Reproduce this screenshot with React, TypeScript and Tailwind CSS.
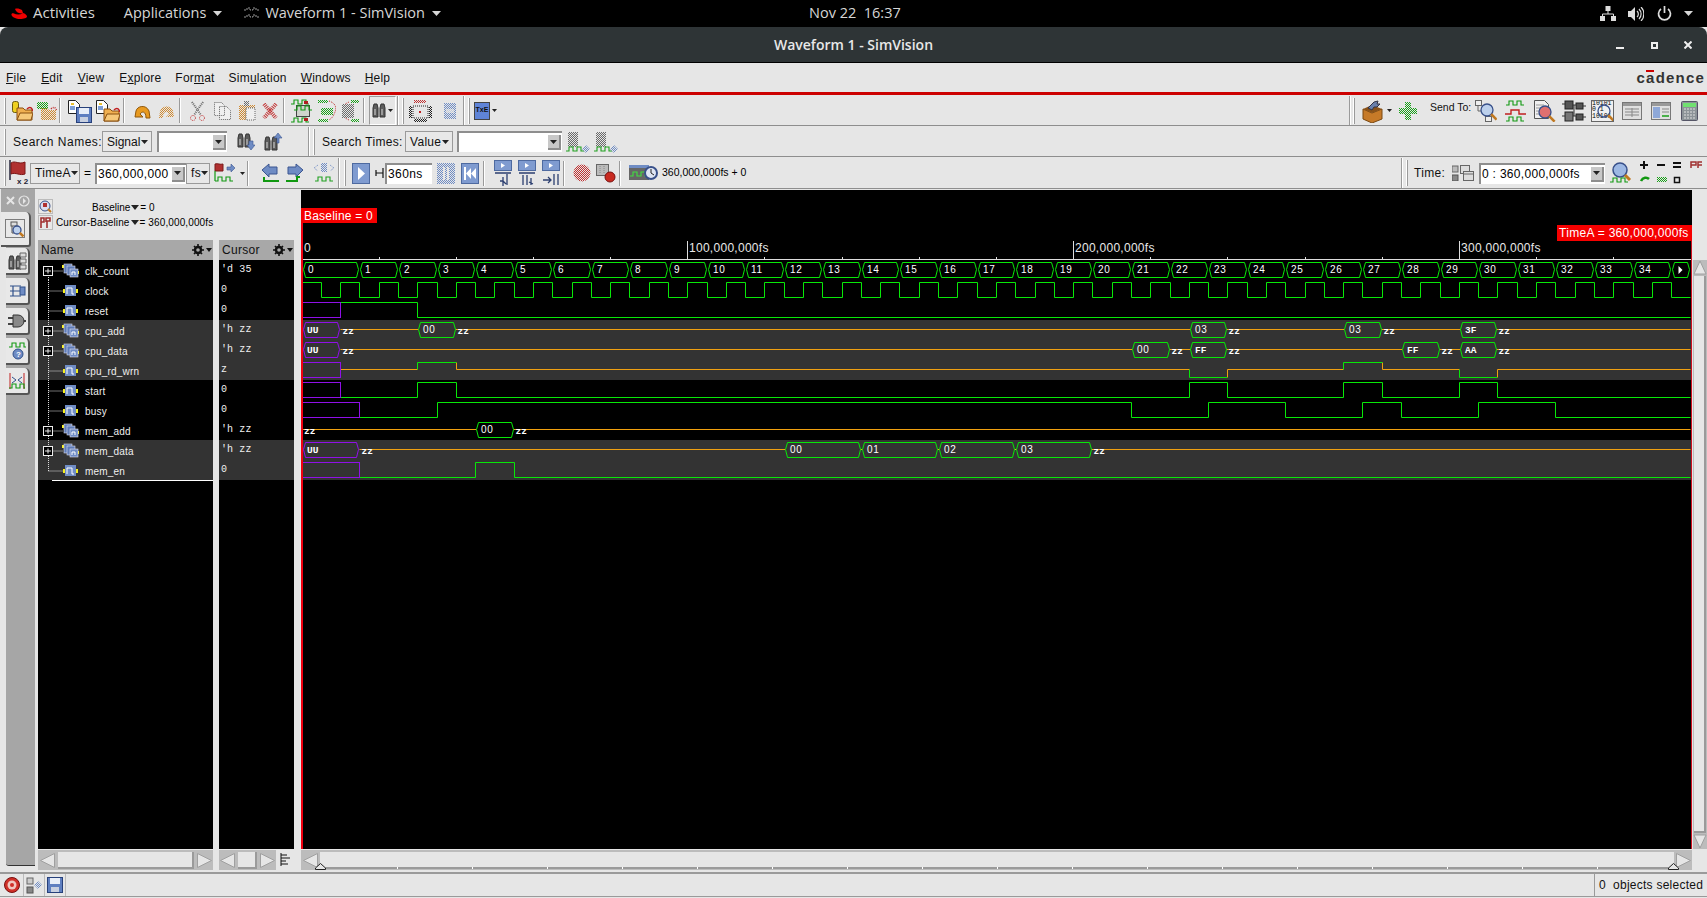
import React from "react";

type P = { w: number; h: number; className?: string; children?: React.ReactNode };
const S = ({ w, h, className = "", children }: P) => (
  <svg width={w} height={h} viewBox={`0 0 ${w} ${h}`} className={`block shrink-0 ${className}`}>
    {children}
  </svg>
);

const Defs = () => (
  <svg width="0" height="0" className="absolute">
    <defs>
      {[
        ["cg", "#6a6a6a"],
        ["cgr", "#18a018"],
        ["co", "#d08a30"],
        ["cr", "#c03030"],
        ["cb", "#6f8cc4"],
        ["ck", "#202020"],
      ].map(([id, c]) => (
        <pattern key={id} id={id} width="2" height="2" patternUnits="userSpaceOnUse">
          <rect width="1" height="1" fill={c} />
          <rect x="1" y="1" width="1" height="1" fill={c} />
        </pattern>
      ))}
    </defs>
  </svg>
);

const wave = "M0 5h3v-4h4v4h4v-4h4v4h3";
const Folder = ({ x = 0, y = 0, dim = false }: { x?: number; y?: number; dim?: boolean }) => (
  <g transform={`translate(${x} ${y})`}>
    <path d="M1 1h6l2 2h7v10H1z" fill={dim ? "url(#co)" : "#f0b050"} stroke={dim ? "none" : "#8a5010"} />
    {!dim && <path d="M1 13l3-7h13l-2 7z" fill="#f6c878" stroke="#8a5010" />}
    <path d="M11 2c2-2 4-2 5 0l1 2" fill="none" stroke={dim ? "#c03030" : "#c02020"} strokeDasharray={dim ? "1 1" : undefined} strokeWidth="1.5" />
  </g>
);
const Page = ({ x = 0, y = 0 }: { x?: number; y?: number }) => (
  <g transform={`translate(${x} ${y})`}>
    <path d="M.5.5h7l4 4v9h-11z" fill="#fff" stroke="#222" />
    <rect x="2" y="6" width="5" height="4" fill="#7ea0d8" />
    <rect x="3" y="3" width="3" height="2" fill="#e8c030" />
  </g>
);
const Binoc = ({ x = 0, y = 0 }: { x?: number; y?: number }) => (
  <g transform={`translate(${x} ${y})`}>
    <path d="M1 5l1-4h3l1 4v9H1zM8 5l1-4h3l1 4v9H8z" fill="#5c5c5c" stroke="#333" />
    <rect x="6" y="5" width="2" height="4" fill="#888" />
    <rect x="2" y="6" width="2" height="6" fill="#9a9a9a" />
    <rect x="9" y="6" width="2" height="6" fill="#9a9a9a" />
  </g>
);
const Mag = ({ x = 0, y = 0, r = 6, fill = "#bcd0ec" }: { x?: number; y?: number; r?: number; fill?: string }) => (
  <g transform={`translate(${x} ${y})`}>
    <circle cx={r} cy={r} r={r} fill={fill} stroke="#38508a" strokeWidth="1.3" />
    <path d={`M${r * 1.7} ${r * 1.7}l${r * 0.9} ${r * 0.9}`} stroke="#c07820" strokeWidth="2.6" />
  </g>
);
const GreenWave = ({ x = 0, y = 0, c = "#109810" }: { x?: number; y?: number; c?: string }) => (
  <path d={wave} transform={`translate(${x} ${y})`} fill="none" stroke={c} strokeWidth="1.1" />
);
const DD = ({ className = "", w = 5, c = "#222" }: { className?: string; w?: number; c?: string }) => (
  <S w={w} h={Math.round(w * 0.6)} className={className}>
    <path d={`M0 0h${w}L${w / 2} ${Math.round(w * 0.6)}z`} fill={c} />
  </S>
);
const Handle = ({ className = "" }: { className?: string }) => (
  <div className={`h-[26px] w-[2px] shrink-0 bg-[#9a9a9a] border-l border-white ${className}`} />
);
const Sep = ({ className = "" }: { className?: string }) => (
  <div className={`h-[25px] w-[2px] shrink-0 border-l border-[#9a9a9a] border-r border-r-white ${className}`} />
);
const GroupLine = ({ className = "" }: { className?: string }) => (
  <div className={`h-full w-[2px] shrink-0 border-l border-[#9a9a9a] border-r border-r-white ${className}`} />
);

const Opt = ({ label, className = "" }: { label: string; className?: string }) => (
  <div className={`h-[21px] shrink-0 flex items-center justify-between pl-[4px] pr-[3px] border border-[#9a9a9a] bg-[#e8e8e8] text-[12px] tracking-[0.3px] text-[#111] ${className}`}>
    <span>{label}</span>
    <DD w={7} />
  </div>
);
const Combo = ({ value = "", className = "", noBtn = false }: { value?: string; className?: string; noBtn?: boolean }) => (
  <div className={`h-[21px] shrink-0 flex items-center justify-between bg-white border-t-2 border-l-2 border-[#8e8e8e] text-[12px] text-black pl-[1px] ${className}`}>
    <span className="whitespace-pre">{value}</span>
    {!noBtn && (
      <div className="w-[13px] h-[15px] mr-[1px] bg-[#c8c8c8] border-r-2 border-b-2 border-[#8e8e8e] flex items-center justify-center">
        <DD w={7} />
      </div>
    )}
  </div>
);

const Btn = ({ className = "", children }: { className?: string; children: React.ReactNode }) => (
  <S w={18} h={21} className={className}>
    <rect x=".5" y=".5" width="17" height="20" fill="#7f9bd0" stroke="#4e6aa0" />
    {children}
  </S>
);
const Step = ({ className = "", d }: { className?: string; d: string }) => (
  <S w={18} h={26} className={className}>
    <rect x=".5" y=".5" width="17" height="10" fill="#7f9bd0" stroke="#4e6aa0" />
    <path d="M7 3l4 2.5L7 8z" fill="#fff" />
    <path d={d} fill="none" stroke="#2c3f70" strokeWidth="1.3" />
  </S>
);
const BigArrow = ({ className = "", right = false }: { className?: string; right?: boolean }) => (
  <S w={21} h={20} className={className}>
    <g transform={right ? "translate(21 0) scale(-1 1)" : ""}>
      <path d="M4 7l7-6v3h8v7h-8v3z" fill="#6f8cc4" stroke="#3a5590" />
    </g>
    <path d={right ? "M0 18h11v-4h3" : "M6 14v4h15"} fill="none" stroke="#109810" strokeWidth="2" />
  </S>
);

const Toolbar1 = () => (
  <div className="h-[31px] flex items-center border-b border-[#8e8e8e] shrink-0 pt-[1px]">
    <Handle className="ml-[4px]" />
    <S w={22} h={22} className="ml-[5px]">
      <rect x="1.5" y="1.5" width="6" height="11" rx="2" fill="#eed020" stroke="#6a5a10" />
      <Folder x={5} y={7} />
    </S>
    <S w={21} h={22} className="ml-[3px]">
      <rect x="1" y="2" width="11" height="7" fill="url(#cgr)" />
      <Folder x={4} y={7} dim />
    </S>
    <Sep className="ml-[2px]" />
    <S w={25} h={24} className="ml-[7px]">
      <Page y={1} />
      <rect x="8.5" y="8.5" width="15" height="15" fill="#5f7fc0" stroke="#27407a" />
      <rect x="11" y="9" width="10" height="6" fill="#e8eef8" />
      <rect x="12" y="18" width="8" height="5" fill="#c8d0e0" />
    </S>
    <S w={24} h={24} className="ml-[3px]">
      <Page y={1} />
      <Folder x={7} y={9} />
    </S>
    <Sep className="ml-[3px]" />
    <S w={17} h={16} className="ml-[9px]">
      <path d="M2 8c1-5 10-7 13 0l1 7h-4c0-7-4-7-6-4l3 3H1z" fill="#e89a20" stroke="#90580c" />
    </S>
    <S w={18} h={16} className="ml-[6px]">
      <path d="M16 8C15 3 6 1 3 8l-1 7h4c0-7 4-7 6-4l-3 3h8z" fill="url(#co)" />
    </S>
    <Sep className="ml-[4px]" />
    <S w={15} h={20} className="ml-[9px]">
      <path d="M2 1l9 13M13 1L4 14" stroke="#6a6a6a" strokeWidth="2" strokeDasharray="1 1" fill="none" />
      <circle cx="3" cy="17" r="2.5" fill="none" stroke="#c03030" strokeDasharray="1 1" />
      <circle cx="12" cy="17" r="2.5" fill="none" stroke="#c03030" strokeDasharray="1 1" />
    </S>
    <S w={17} h={18} className="ml-[9px]">
      <path d="M.5.5h7l3 3v10h-10zM5.5 4.5h7l4 4v9h-11z" fill="#efefef" stroke="#666" strokeDasharray="1 1" />
    </S>
    <S w={18} h={20} className="ml-[7px]">
      <path d="M1 4h16v15H1z" fill="url(#co)" />
      <path d="M6 0h5v5H6z" fill="url(#cg)" />
      <path d="M8 7h9v12H8z" fill="#efefef" stroke="#666" strokeDasharray="1 1" />
    </S>
    <S w={16} h={16} className="ml-[6px]">
      <path d="M2 1l12 14M14 1L2 15" stroke="#c03030" strokeWidth="4" strokeDasharray="1 1" fill="none" />
    </S>
    <Sep className="ml-[5px]" />
    <S w={22} h={24} className="ml-[6px]">
      <rect x="5.5" y="6.5" width="13" height="11" fill="#cfd4cc" stroke="#444" />
      <GreenWave x={3} y={6} />
      <GreenWave x={0} y={0} />
      <GreenWave x={0} y={18} />
      <rect x="13" y="2" width="4" height="3" fill="#b02020" />
      <rect x="13" y="19" width="4" height="3" fill="#b02020" />
    </S>
    <S w={19} h={24} className="ml-[4px]">
      <rect x="1" y="1" width="10" height="3" fill="url(#cgr)" />
      <rect x="1" y="20" width="10" height="3" fill="url(#cgr)" />
      <rect x="4" y="9" width="12" height="7" fill="url(#cgr)" />
      <path d="M12 2c6 2 8 6 6 11s-3 6-6 8" fill="none" stroke="#c03030" strokeDasharray="1 1" />
    </S>
    <S w={20} h={24} className="ml-[4px]">
      <rect x="2" y="5" width="12" height="14" fill="url(#cg)" />
      <rect x="11" y="1" width="8" height="3" fill="url(#cgr)" />
      <rect x="11" y="20" width="8" height="3" fill="url(#cgr)" />
      <path d="M9 3L5 5M9 21l-4-2" stroke="#c03030" strokeDasharray="1 1" />
    </S>
    <Sep className="ml-[3px]" />
    <div className="ml-[4px] w-[27px] h-[29px] shrink-0 flex items-center border-t border-l border-[#9a9a9a] border-r border-r-white border-b border-b-white">
      <S w={14} h={16} className="ml-[2px]"><Binoc /></S>
      <DD className="ml-[2px]" />
    </div>
    <GroupLine className="ml-[1px]" />
    <Handle className="ml-[3px]" />
    <S w={23} h={24} className="ml-[5px]">
      <rect x="5" y="1" width="12" height="3" fill="url(#cr)" />
      <rect x="4" y="7" width="15" height="12" fill="none" stroke="#222" strokeDasharray="1 1" />
      <rect x="0" y="7" width="3" height="12" fill="url(#ck)" />
      <rect x="20" y="7" width="3" height="12" fill="url(#ck)" />
      <rect x="5" y="20" width="13" height="3" fill="url(#ck)" />
      <rect x="10" y="12" width="2" height="2" fill="#c02020" />
    </S>
    <S w={14} h={18} className="ml-[11px]">
      <rect x="1" y="1" width="12" height="16" fill="url(#cb)" />
      <rect x="3" y="7" width="8" height="4" fill="#e6e6e6" opacity=".7" />
    </S>
    <GroupLine className="ml-[6px]" />
    <Handle className="ml-[3px]" />
    <div className="ml-[4px] w-[16px] h-[18px] shrink-0 bg-[#5f84d8] border border-[#444] flex items-center justify-center text-[7px] font-bold text-[#111]">TxE</div>
    <DD className="ml-[2px]" />
    <div className="ml-auto w-[358px] h-full flex items-center">
      <GroupLine />
      <Handle className="ml-[2px]" />
      <S w={21} h={24} className="ml-[7px]">
        <path d="M1 10l9 4 10-4v10l-10 4-9-4z" fill="#c67a28" stroke="#7a4810" />
        <path d="M1 10l9-4 10 4-10 4z" fill="#8a5218" />
        <path d="M6 9l6-6 4-1-1 3 3 0-3 3-3 0-2 3z" fill="#6a80ac" stroke="#334" />
      </S>
      <DD className="ml-[4px]" />
      <S w={18} h={18} className="ml-[7px]">
        <path d="M6 0h6v6h6v6h-6v6H6v-6H0V6h6z" fill="url(#cgr)" />
      </S>
      <div className="ml-[13px] w-[40px] -mt-[6px] text-[10.5px] whitespace-nowrap text-[#111]">Send To:</div>
      <S w={22} h={22} className="ml-[5px]">
        <rect x=".5" y=".5" width="6" height="5" fill="#eee" stroke="#666" />
        <rect x="10.5" y="16.5" width="6" height="5" fill="#eee" stroke="#666" />
        <path d="M3 6v5h4" fill="none" stroke="#666" />
        <Mag x={6} y={4} />
      </S>
      <S w={21} h={22} className="ml-[8px]">
        <GreenWave x={1} y={0} />
        <path d="M0 14h6v-4h8v4h7" fill="none" stroke="#c02020" strokeWidth="1.4" />
        <GreenWave x={1} y={16} />
      </S>
      <S w={22} h={22} className="ml-[8px]">
        <path d="M.5.5h10l4 4v14H.5z" fill="#f0f0f0" stroke="#555" />
        <path d="M2 5h8M2 8h8M2 11h8M2 14h8" stroke="#999" />
        <Mag x={5} y={6} fill="#e07070" />
      </S>
      <S w={24} h={22} className="ml-[6px]">
        <rect x="3" y="1" width="8" height="8" fill="#555" stroke="#222" />
        <rect x="3" y="12" width="8" height="9" fill="#777" stroke="#222" />
        <rect x="14" y="3" width="7" height="6" fill="#555" stroke="#222" />
        <rect x="14" y="14" width="7" height="6" fill="#555" stroke="#222" />
        <path d="M0 4h3M0 16h3M11 5h3M11 16h3M21 6h3M21 17h3M12 5v11" stroke="#333" fill="none" />
      </S>
      <div className="ml-[5px] relative w-[23px] h-[22px] shrink-0 border border-[#666] bg-[#f0f0f0] text-[6.5px] leading-[6.5px] text-black overflow-hidden font-['Liberation_Mono']">
        10101<br />0 1 <br />10101
        <svg width="23" height="22" className="absolute -left-[1px] -top-[1px]">
          <Mag x={7} y={5} r={6} fill="none" />
        </svg>
      </div>
      <S w={20} h={18} className="ml-[8px]">
        <rect x=".5" y=".5" width="19" height="17" fill="#e0e0e0" stroke="#777" />
        <rect x="1" y="1" width="18" height="3" fill="#999" />
        <path d="M3 7h14M3 10h14M3 13h14M10 6v9" stroke="#888" />
      </S>
      <S w={20} h={18} className="ml-[9px]">
        <rect x=".5" y=".5" width="19" height="17" fill="#e0e0e0" stroke="#777" />
        <rect x="1" y="1" width="18" height="3" fill="#999" />
        <rect x="2" y="5" width="7" height="11" fill="#8ea8d8" />
        <path d="M11 7h7M11 10h7" stroke="#888" />
        <path d="M11 14h7" stroke="#18a018" strokeWidth="1.5" />
      </S>
      <S w={17} h={20} className="ml-[10px]">
        <rect x=".5" y=".5" width="16" height="19" rx="1" fill="#8c9398" stroke="#556" />
        <rect x="2" y="2" width="13" height="4" fill="#70e070" />
        <path d="M3 8h11M3 11h11M3 14h11M3 17h11" stroke="#e0e0e0" strokeDasharray="2 1" />
      </S>
    </div>
  </div>
);

const Toolbar2 = () => (
  <div className="h-[30px] mt-[1px] flex items-center border-b border-[#8e8e8e] shrink-0">
    <Handle className="ml-[4px]" />
    <div className="ml-[7px] w-[85px] text-[12px] tracking-[0.5px] whitespace-nowrap text-[#111]">Search Names:</div>
    <Opt label="Signal" className="ml-[4px] w-[50px] !tracking-normal" />
    <Combo className="ml-[5px] w-[70px]" />
    <S w={18} h={20} className="ml-[10px]">
      <Binoc y={1} />
      <path d="M12 9h4v4h2l-4 5-4-5h2z" fill="#6f8cc4" stroke="#3a5590" strokeWidth=".6" />
    </S>
    <S w={19} h={20} className="ml-[9px]">
      <Binoc y={4} />
      <path d="M13 11V6h-3l4-5 4 5h-3v5z" fill="#6f8cc4" stroke="#3a5590" strokeWidth=".6" />
    </S>
    <GroupLine className="ml-[25px]" />
    <Handle className="ml-[3px]" />
    <div className="ml-[7px] w-[78px] text-[12px] tracking-[0.3px] whitespace-nowrap text-[#111]">Search Times:</div>
    <Opt label="Value" className="ml-[5px] w-[48px]" />
    <Combo className="ml-[4px] w-[105px]" />
    <S w={24} h={22} className="ml-[4px]">
      <rect x="2" y="1" width="10" height="15" fill="url(#cg)" />
      <GreenWave x={0} y={15} c="#20a020" />
      <path d="M16 18l4-4 4 4-4 4z" fill="url(#cb)" />
    </S>
    <S w={24} h={22} className="ml-[4px]">
      <rect x="2" y="1" width="10" height="15" fill="url(#cg)" />
      <GreenWave x={0} y={15} c="#20a020" />
      <path d="M16 18l4-4 4 4-4 4z" fill="url(#cb)" />
    </S>
  </div>
);

const Toolbar3 = () => (
  <div className="h-[31px] mt-[1px] flex items-center border-b border-[#8e8e8e] shrink-0">
    <Handle className="ml-[4px]" />
    <div className="ml-[3px] relative w-[21px] h-[26px] shrink-0">
      <S w={18} h={20}>
        <path d="M1 0v20" stroke="#556" strokeWidth="2" />
        <path d="M2 3c4-3 8 2 14-1v12c-5 2-9-2-14 0z" fill="#b03030" stroke="#7a1818" />
      </S>
      <span className="absolute left-[8px] top-[17px] text-[8px] font-bold leading-[10px] text-[#223] whitespace-nowrap">x 2</span>
    </div>
    <Opt label="TimeA" className="w-[50px]" />
    <span className="ml-[4px] w-[6px] text-[12px] text-black">=</span>
    <Combo value="360,000,000" className="ml-[5px] w-[91px] tracking-[0.35px]" />
    <Opt label="fs" className="w-[24px]" />
    <S w={22} h={20} className="ml-[4px]">
      <path d="M1 1c3-1 5 1 8 0v7H1z" fill="#b03030" stroke="#7a1818" />
      <path d="M13 4h4V1l4 4-4 4V7h-4z" fill="#6f8cc4" stroke="#3a5590" strokeWidth=".6" />
      <GreenWave x={1} y={13} />
      <path d="M1 8v10" stroke="#109810" strokeWidth="1.2" />
    </S>
    <DD className="ml-[4px]" />
    <Sep className="ml-[2px]" />
    <BigArrow className="ml-[9px]" />
    <BigArrow className="ml-[7px]" right />
    <S w={22} h={22} className="ml-[6px]">
      <rect x="8" y="1" width="6" height="9" fill="url(#cb)" />
      <path d="M5 3L1 6l4 3M17 3l4 3-4 3" fill="none" stroke="#6f8cc4" strokeDasharray="1 1" />
      <GreenWave x={2} y={14} c="#20a020" />
    </S>
    <GroupLine className="ml-[3px]" />
    <Handle className="ml-[4px]" />
    <Btn className="ml-[6px]"><path d="M6 4l7 6.5L6 17z" fill="#fff" /></Btn>
    <S w={9} h={12} className="ml-[5px]">
      <path d="M8 1v10M1 3v6M1 6h7" stroke="#111" strokeWidth="1.2" fill="none" />
    </S>
    <Combo value="360ns" noBtn className="ml-[1px] w-[47px] tracking-[0.4px]" />
    <S w={18} h={21} className="ml-[5px]">
      <rect x="0" y="0" width="18" height="21" fill="url(#cb)" />
      <rect x="6" y="4" width="2" height="13" fill="#e6e6e6" />
      <rect x="10" y="4" width="2" height="13" fill="#e6e6e6" />
    </S>
    <Btn className="ml-[6px]"><path d="M3 4h2v13H3zM5 10.5L10 5v11zM10 10.5L15 5v11z" fill="#fff" /></Btn>
    <Sep className="ml-[4px]" />
    <Step className="ml-[9px]" d="M1 13h16M9 17v9M6 21h3l0 0M13 14v11M9 21l3 3" />
    <Step className="ml-[6px]" d="M1 13h16M5 15v10M9 15v10M13 18v7M11 22l4 2" />
    <Step className="ml-[6px]" d="M1 20h8M6 17l3 3-3 3M12 14v11M16 14v11" />
    <Sep className="ml-[3px]" />
    <S w={18} h={18} className="ml-[8px]">
      <circle cx="9" cy="9" r="8.5" fill="url(#cr)" />
    </S>
    <S w={20} h={20} className="ml-[5px]">
      <rect x=".5" y="1.5" width="12" height="11" fill="#bbb" stroke="#666" />
      <path d="M4 3v8M8 3v8" stroke="#888" strokeDasharray="1 1" />
      <circle cx="14" cy="14" r="5" fill="#c82a20" stroke="#7a1010" />
    </S>
    <Sep className="ml-[3px]" />
    <S w={29} h={16} className="ml-[8px]">
      <rect x="0" y="0" width="20" height="15" fill="#666" />
      <rect x="0" y="0" width="20" height="3" fill="#6f8cc4" />
      <GreenWave x={1} y={6} c="#40e040" />
      <circle cx="22" cy="8" r="6" fill="#dfe6f4" stroke="#38508a" strokeWidth="2" />
      <path d="M22 4v4l3 2" stroke="#222" fill="none" />
    </S>
    <span className="ml-[4px] w-[87px] text-[10.5px] whitespace-nowrap text-black">360,000,000fs + 0</span>
    <div className="ml-auto w-[306px] h-full flex items-center">
      <GroupLine />
      <Handle className="ml-[3px]" />
      <span className="ml-[6px] w-[29px] text-[12px] tracking-[0.3px] text-[#111]">Time:</span>
      <S w={22} h={16} className="ml-[9px]">
        <rect x="0" y="1" width="6" height="6" fill="#bbb" stroke="#666" />
        <rect x="0" y="10" width="6" height="6" fill="#888" stroke="#555" />
        <rect x="8.5" y=".5" width="9" height="8" fill="#ddd" stroke="#666" />
        <rect x="11.5" y="6.5" width="10" height="9" fill="#ddd" stroke="#666" />
        <path d="M12 9h9" stroke="#666" />
      </S>
      <Combo value="0 : 360,000,000fs" className="ml-[5px] w-[126px] tracking-[0.3px]" />
      <S w={22} h={22} className="ml-[5px]">
        <circle cx="10" cy="8" r="7" fill="#9db8e4" stroke="#38508a" strokeWidth="1.5" />
        <path d="M15 13l5 5" stroke="#c07820" strokeWidth="3" />
        <GreenWave x={0} y={15} />
      </S>
      <S w={64} h={26} className="ml-[6px]">
        <path d="M6 1v8M2 5h8M19 5h8M35 3h8M35 7h8" stroke="#111" strokeWidth="2" fill="none" />
        <path d="M53 8V2h5v3h-5M60 8V2h5v3h-5" stroke="#a03030" strokeWidth="1.5" fill="none" />
        <path d="M3 21c2-4 6-4 8-2" stroke="#109810" strokeWidth="2.5" fill="none" />
        <rect x="19" y="17" width="10" height="5" fill="url(#cgr)" />
        <rect x="36.5" y="17.5" width="5" height="5" fill="none" stroke="#111" strokeWidth="1.5" />
      </S>
    </div>
  </div>
);

const X = (t: number) => Math.floor(t * 3.858 + 1) + 0.5;
const GREEN = "#08e808";
const ORANGE = "#f0a010";
const PURPLE = "#9010e8";
const hex = (a: number, b: number, y: number) => {
  const x0 = X(a) + 1;
  const x1 = X(b) - 1;
  return `M${x0} ${y + 9.5}L${x0 + 2} ${y + 2.5}H${x1 - 2}L${x1} ${y + 9.5}L${x1 - 2} ${y + 17.5}H${x0 + 2}Z`;
};
const digit = (t: number, y: number, s: string) => (
  <text key={`${t}-${y}`} x={X(t) + 5.5} y={y + 13} fontFamily="Liberation Sans" fontSize="10" letterSpacing="0.6" fill="#fff">{s}</text>
);
const mono = (x: number, y: number, s: string) => (
  <text key={`${x}-${y}-${s}`} x={x} y={y + 13} fontFamily="Liberation Mono" fontSize="9.5" fontWeight="bold" fill="#fff">{s}</text>
);
const digital = (y: number, edges: number[], startHigh: boolean, start = 0) => {
  let d = `M${X(start)} ${y + (startHigh ? 2.5 : 17.5)}`;
  let hi = startHigh;
  for (const e of edges) {
    d += `H${X(e)}V${y + (hi ? 17.5 : 2.5)}`;
    hi = !hi;
  }
  return d + `H${X(360)}`;
};
const Z = ({ a, b, y }: { a: number; b: number; y: number }) => (
  <path d={`M${X(a)} ${y + 9.5}H${X(b)}`} stroke={ORANGE} fill="none" />
);
const Y = (i: number) => 70 + 20 * i;

const Bus = ({ row, a, b, s, noZ }: { row: number; a: number; b: number; s: string; noZ?: boolean }) => {
  const y = Y(row);
  return (
    <g>
      <path d={hex(a, b, y)} fill={row === 0 ? "#000" : row >= 9 || row < 6 ? "#333" : "#000"} stroke={GREEN} />
      {/^\d+$/.test(s) ? (
        <text x={X(a) + 5.5} y={y + 13} fontFamily="Liberation Sans" fontSize="10" letterSpacing="0.8" fill="#fff">{s}</text>
      ) : (
        mono(X(a) + 5.5, y, s)
      )}
      {!noZ && mono(X(b) + 1, y + 1, "zz")}
    </g>
  );
};

const Purple = ({ row, b, bus }: { row: number; b: number; bus?: boolean }) => {
  const y = Y(row);
  return bus ? (
    <g>
      <path d={hex(0, b, y)} fill="#333" stroke={PURPLE} />
      {mono(6, y, "UU")}
      {mono(X(b) + 2, y + 1, "zz")}
    </g>
  ) : (
    <rect x="1.5" y={y + 2.5} width={X(b) - 1.5} height="15" fill="none" stroke={PURPLE} />
  );
};

const Waves = () => {
  const w = 1391;
  const clockEdges: number[] = [];
  for (let t = 5; t < 360; t += 5) clockEdges.push(t);
  const ticks: number[] = [];
  for (let t = 20; t <= 340; t += 20) if (t % 100) ticks.push(t);
  return (
    <svg width={w} height={659} viewBox={`0 0 ${w} 659`} className="block shrink-0 bg-black">
      <rect y="130" width={w - 1} height="60" fill="#333" />
      <rect y="250" width={w - 1} height="40" fill="#333" />

      <path d={`M0 69.5H${w}`} stroke="#ddd" />
      {ticks.map((t) => <path key={t} d={`M${X(t)} 67V69`} stroke="#ddd" />)}
      {[100, 200, 300].map((t) => (
        <g key={t}>
          <path d={`M${X(t)} 51V69`} stroke="#ddd" />
          <text x={X(t) + 1.5} y="62" fontFamily="Liberation Sans" fontSize="12" letterSpacing="0.28" fill="#e8e8e8">{`${t},000,000fs`}</text>
        </g>
      ))}
      <text x="3" y="62" fontFamily="Liberation Sans" fontSize="12" fill="#e8e8e8">0</text>

      <Bus row={0} a={0} b={15} s="0" noZ />
      {Array.from({ length: 34 }, (_, i) => (
        <g key={i}>
          <path d={hex(15 + i * 10, 25 + i * 10, Y(0))} fill="none" stroke={GREEN} />
          {digit(15 + i * 10, Y(0), String(i + 1))}
        </g>
      ))}
      <path d={hex(355, 360, Y(0))} fill="none" stroke={GREEN} />
      <path d={`M${X(355) + 7} ${Y(0) + 6}l4 4-4 4z`} fill="#fff" />

      <path d={digital(Y(1), clockEdges, true)} fill="none" stroke={GREEN} />
      <path d={digital(Y(2), [30], true, 10)} fill="none" stroke={GREEN} />
      <Purple row={2} b={10} />

      <Z a={10} b={360} y={Y(3)} />
      <Purple row={3} b={10} bus />
      <Bus row={3} a={30} b={40} s="00" />
      <Bus row={3} a={230} b={240} s="03" />
      <Bus row={3} a={270} b={280} s="03" />
      <Bus row={3} a={300} b={310} s="3F" />

      <Z a={10} b={360} y={Y(4)} />
      <Purple row={4} b={10} bus />
      <Bus row={4} a={215} b={225} s="00" />
      <Bus row={4} a={230} b={240} s="FF" />
      <Bus row={4} a={285} b={295} s="FF" />
      <Bus row={4} a={300} b={310} s="AA" />

      <path d={`M${X(10)} ${Y(5) + 9.5}H${X(30)}M${X(40)} ${Y(5) + 2.5}V${Y(5) + 9.5}H${X(230)}M${X(240)} ${Y(5) + 17.5}V${Y(5) + 9.5}H${X(270)}M${X(280)} ${Y(5) + 2.5}V${Y(5) + 9.5}H${X(300)}M${X(310)} ${Y(5) + 17.5}V${Y(5) + 9.5}H${X(360)}`} fill="none" stroke={ORANGE} />
      <path d={`M${X(30)} ${Y(5) + 9.5}V${Y(5) + 2.5}H${X(40)}M${X(230)} ${Y(5) + 9.5}V${Y(5) + 17.5}H${X(240)}M${X(270)} ${Y(5) + 9.5}V${Y(5) + 2.5}H${X(280)}M${X(300)} ${Y(5) + 9.5}V${Y(5) + 17.5}H${X(310)}`} fill="none" stroke={GREEN} />
      <Purple row={5} b={10} />

      <path d={digital(Y(6), [30, 40, 230, 240, 270, 280, 300, 310], false, 10)} fill="none" stroke={GREEN} />
      <Purple row={6} b={10} />
      <path d={digital(Y(7), [35, 215, 235, 255, 275, 285, 305, 325], false, 15)} fill="none" stroke={GREEN} />
      <Purple row={7} b={15} />

      <Z a={0} b={360} y={Y(8)} />
      {mono(3, Y(8) + 1, "zz")}
      <Bus row={8} a={45} b={55} s="00" />

      <Z a={15} b={360} y={Y(9)} />
      <Purple row={9} b={15} bus />
      <Bus row={9} a={125} b={145} s="00" noZ />
      <Bus row={9} a={145} b={165} s="01" noZ />
      <Bus row={9} a={165} b={185} s="02" noZ />
      <Bus row={9} a={185} b={205} s="03" />

      <path d={digital(Y(10), [45, 55], false, 15)} fill="none" stroke={GREEN} />
      <Purple row={10} b={15} />

      <path d="M1 18V659" stroke="#f00010" strokeWidth="2" />
      <path d="M1390.5 35V659" stroke="#d01020" />

      <rect x="0" y="18" width="76" height="15" fill="#f60000" />
      <text x="3" y="30" fontFamily="Liberation Sans" fontSize="12" letterSpacing="0.2" fill="#fff">Baseline = 0</text>
      <rect x="1256" y="35" width="135" height="16" fill="#f60000" />
      <text x="1258" y="47" fontFamily="Liberation Sans" fontSize="12" letterSpacing="0.3" fill="#fff">TimeA = 360,000,000fs</text>
    </svg>
  );
};

const Tree = ({ first, last, group }: { first?: boolean; last?: boolean; group?: boolean }) => (
  <S w={43} h={20} className="ml-[5px]">
    <path d={`M5.5 ${first ? 11 : 0}V${last ? 11 : 20}M5.5 11H20`} stroke="#ddd" strokeDasharray="1 1" fill="none" />
    {group && (
      <g>
        <rect x=".5" y="6.5" width="9" height="9" fill="#000" stroke="#eee" />
        <path d="M2 11h6M5 8.5v5" stroke="#eee" />
      </g>
    )}
    {group ? (
      <g>
        <rect x="19" y="5" width="2" height="3" fill="#f4ee20" />
        <rect x="34" y="11" width="2" height="3" fill="#f4ee20" />
        <rect x="21" y="4" width="8" height="9" fill="#5f7cb8" stroke="#dde" strokeWidth=".6" />
        <rect x="24" y="6" width="8" height="9" fill="#5f7cb8" stroke="#dde" strokeWidth=".6" />
        <rect x="27" y="9" width="8" height="8" fill="#6f8cc4" stroke="#dde" strokeWidth=".6" />
        <path d="M29 15v-3h3v3" stroke="#fff" fill="none" />
      </g>
    ) : (
      <g>
        <rect x="20" y="9" width="2" height="4" fill="#f4ee20" />
        <rect x="33" y="9" width="2" height="4" fill="#f4ee20" />
        <rect x="22" y="5" width="11" height="11" fill="#6f8cc4" />
        <path d="M24 14v-6h5v6h2" stroke="#fff" fill="none" />
      </g>
    )}
  </S>
);

const SIG: [string, string, boolean][] = [
  ["clk_count", "'d 35", true],
  ["clock", "0", false],
  ["reset", "0", false],
  ["cpu_add", "'h zz", true],
  ["cpu_data", "'h zz", true],
  ["cpu_rd_wrn", "z", false],
  ["start", "0", false],
  ["busy", "0", false],
  ["mem_add", "'h zz", true],
  ["mem_data", "'h zz", true],
  ["mem_en", "0", false],
];
const darkRow = (i: number) => (i >= 3 && i <= 5) || i >= 9;

const Arrow = ({ d, className = "" }: { d: string; className?: string }) => (
  <S w={17} h={17} className={className}>
    <path d={d} fill="#e6e6e6" stroke="#a0a0a0" />
  </S>
);
const LEFT = "M15.5 1.5v14L1.5 8.5z";
const RIGHT = "M1.5 1.5v14L15.5 8.5z";

const Cog = () => (
  <S w={20} h={12}>
    <circle cx="6" cy="6" r="3" fill="none" stroke="#111" strokeWidth="2.4" />
    <path d="M6 0v2M6 10v2M0 6h2M10 6h2M2 2l1.4 1.4M8.6 8.6L10 10M2 10l1.4-1.4M8.6 3.4L10 2" stroke="#111" strokeWidth="1.6" />
    <path d="M14 4h6l-3 4z" fill="#111" />
  </S>
);

const Tab = ({ first, children }: { first?: boolean; children: React.ReactNode }) => (
  <div className={`${first ? "-ml-[5px] w-[30px] h-[35px] mb-[1px]" : "ml-0 w-[24px] h-[27px] mb-[3px]"} shrink-0 bg-[#e8e8e8] border-r-2 border-b-2 border-[#555] rounded-tr-[5px] rounded-br-[3px] flex items-center justify-center`}>
    {children}
  </div>
);

const SideTabs = () => (
  <div className="w-[35px] shrink-0 flex flex-col">
    <div className="h-[23px] ml-[1px] bg-[#a6a6a6] flex items-center pl-[5px] gap-[3px] shrink-0">
      <S w={9} h={9}><path d="M1 1l7 7M8 1L1 8" stroke="#e6e6e6" strokeWidth="2" /></S>
      <S w={12} h={12}>
        <circle cx="6" cy="6" r="5" fill="none" stroke="#e6e6e6" strokeWidth="1.2" />
        <path d="M5 3l3 3-3 3z" fill="#e6e6e6" />
      </S>
    </div>
    <div className="flex-1 ml-[6px] bg-[#a6a6a6] flex flex-col mb-[5px] rounded-bl-[3px] border-b border-[#333]">
      <Tab first>
        <S w={20} h={20}>
          <rect x=".5" y=".5" width="19" height="18" fill="none" stroke="#111" strokeDasharray="1 1" />
          <rect x="6" y="3" width="6" height="4" fill="#ddd" stroke="#555" />
          <path d="M7 7v7h3" stroke="#555" fill="none" />
          <Mag x={8} y={7} r={4} />
        </S>
      </Tab>
      <Tab>
        <S w={19} h={18}>
          <Binoc y={3} />
          <path d="M12 1h6v4h-6zM12 7h6v4h-6zM12 13h6v4h-6z" fill="#ddd" stroke="#666" />
        </S>
      </Tab>
      <Tab>
        <S w={17} h={16}>
          <path d="M1 3h11M1 8h11M1 13h11M4 3v10" stroke="#30508a" strokeWidth="1.2" />
          <rect x="11" y="4" width="5" height="8" fill="#6f8cc4" stroke="#30508a" />
        </S>
      </Tab>
      <Tab>
        <S w={18} h={14}>
          <path d="M0 4h5M0 10h5M14 7h4" stroke="#444" strokeWidth="2" />
          <path d="M5 1h5a6 6 0 0 1 0 12H5z" fill="#888" stroke="#333" />
        </S>
      </Tab>
      <Tab>
        <S w={17} h={18}>
          <GreenWave y={0} />
          <circle cx="9" cy="12" r="5" fill="#6f8cc4" stroke="#30508a" />
          <text x="7" y="15" fontSize="8" fontWeight="bold" fill="#fff" fontFamily="Liberation Sans">?</text>
        </S>
      </Tab>
      <Tab>
        <S w={16} h={18}>
          <path d="M1 1v16M15 1v16" stroke="#c02020" />
          <path d="M3 5l4 3-4 3M13 5L9 8l4 3" stroke="#30508a" fill="none" />
          <GreenWave y={11} />
        </S>
      </Tab>
    </div>
  </div>
);

const NamePanel = () => (
  <div className="ml-[3px] w-[175px] shrink-0 flex flex-col">
    <div className="h-[51px] relative shrink-0 text-[10px] text-black">
      <div className="absolute left-0 top-[10px] w-[15px] h-[15px] border border-[#bbb] bg-[#e8e8e8] flex items-center justify-center">
        <S w={13} h={13}>
          <circle cx="6" cy="6" r="5" fill="#dde" stroke="#38508a" />
          <rect x="4" y="3" width="4" height="4" fill="#b03030" />
          <path d="M9 9l3 3" stroke="#c07820" strokeWidth="2" />
        </S>
      </div>
      <div className="absolute left-0 top-[26px] w-[15px] h-[15px] border border-[#bbb] bg-[#e8e8e8] flex items-center justify-center">
        <S w={13} h={13}><path d="M2 12V2h3v4H2M7 6V2h4v3H8v7" fill="none" stroke="#a03030" strokeWidth="1.6" /></S>
      </div>
      <div className="absolute left-[54px] top-[11px] flex items-center whitespace-nowrap">Baseline<DD className="ml-[1px]" w={8} /><span className="ml-[1px]">= 0</span></div>
      <div className="absolute left-[18px] top-[26px] flex items-center whitespace-nowrap tracking-[0.12px]">Cursor-Baseline<DD className="ml-[1px]" w={8} /><span className="ml-[1px]">= 360,000,000fs</span></div>
    </div>
    <div className="h-5 bg-[#a8a8a8] shrink-0 flex items-center pl-[3px] pr-[1px] justify-between text-[12px] tracking-[0.2px] text-[#111]">
      <span>Name</span><Cog />
    </div>
    <div className="flex-1 bg-black min-h-0">
      {SIG.map(([n, , g], i) => (
        <div key={n} className={`h-5 flex items-center relative ${darkRow(i) ? "bg-[#333]" : "bg-black"}`}>
          <Tree first={i === 0} last={i === 10} group={g} />
          <span className="ml-[-1px] pt-[2px] text-[10px] tracking-[0.2px] text-[#f0f0f0]">{n}</span>
          {i === 10 && (
            <div className="absolute left-[14px] right-0 bottom-[-1px] h-[1px] bg-white" />
          )}
        </div>
      ))}
    </div>
    <div className="h-[20px] mt-[1px] mb-[1px] shrink-0 flex items-center bg-[#bcbcbc]">
      <Arrow d={LEFT} className="ml-[1px]" />
      <div className="flex-1 h-[17px] mx-[2px] bg-[#e6e6e6] border-r-2 border-b-2 border-[#9a9a9a]" />
      <Arrow d={RIGHT} />
    </div>
  </div>
);

const CursorPanel = () => (
  <div className="ml-[6px] w-[75px] shrink-0 flex flex-col">
    <div className="h-[51px] shrink-0" />
    <div className="h-5 bg-[#a8a8a8] shrink-0 flex items-center pl-[3px] pr-[1px] justify-between text-[12px] tracking-[0.3px] text-[#111]">
      <span>Cursor</span><Cog />
    </div>
    <div className="flex-1 bg-black min-h-0">
      {SIG.map(([n, v], i) => (
        <div key={n} className={`h-5 pl-[2px] pb-[1px] flex items-center font-['Liberation_Mono'] text-[10px] tracking-[0.1px] text-[#f0f0f0] whitespace-pre ${darkRow(i) ? "bg-[#333]" : "bg-black"}`}>{v}</div>
      ))}
    </div>
    <div className="h-[20px] mt-[1px] mb-[1px] shrink-0 flex items-center">
      <div className="w-[57px] h-full flex items-center bg-[#bcbcbc]">
        <Arrow d={LEFT} />
        <div className="flex-1 h-[17px] mx-[2px] bg-[#e6e6e6] border-r-2 border-b-2 border-[#9a9a9a]" />
        <Arrow d={RIGHT} />
      </div>
      <S w={18} h={20}>
        <path d="M5 3v13M5 5h6M5 8h9M5 11h5M5 14h7" stroke="#111" fill="none" />
      </S>
    </div>
  </div>
);

const WavePanel = () => (
  <div className="ml-[7px] w-[1391px] shrink-0 flex flex-col">
    <div className="h-[1px] shrink-0" />
    <Waves />
    <div className="h-[20px] mt-[1px] mb-[1px] shrink-0 flex items-center bg-[#bcbcbc] relative">
      <Arrow d={LEFT} className="ml-[1px]" />
      <div className="flex-1 h-[17px] mx-[1px] bg-[#e6e6e6] border-b-2 border-[#9a9a9a]" />
      <Arrow d={RIGHT} />
      <S w={11} h={7} className="absolute left-[14px] bottom-0">
        <path d="M5.5.5l5 4.5v1.5H.5V5z" fill="#e6e6e6" stroke="#222" />
      </S>
      <S w={11} h={7} className="absolute left-[1367px] bottom-0">
        <path d="M5.5.5l5 4.5v1.5H.5V5z" fill="#e6e6e6" stroke="#222" />
      </S>
      <svg width="1391" height="2" className="absolute left-0 bottom-[1px]">
        {Array.from({ length: 17 }, (_, i) => (
          <rect key={i} x={96 + i * 75} width="1" height="2" fill="#fff" />
        ))}
      </svg>
    </div>
  </div>
);

const VScroll = () => (
  <div className="ml-[1px] w-[14px] shrink-0 flex flex-col">
    <div className="h-[71px] shrink-0" />
    <div className="h-[589px] flex flex-col bg-[#bcbcbc] shrink-0">
      <S w={14} h={15}><path d="M7 1l6 13H1z" fill="#e6e6e6" stroke="#a0a0a0" /></S>
      <div className="flex-1 mx-[1px] my-[1px] bg-[#e6e6e6] border-r-2 border-b-2 border-[#9a9a9a]" />
      <S w={14} h={15}><path d="M7 14L13 1H1z" fill="#e6e6e6" stroke="#a0a0a0" /></S>
    </div>
  </div>
);

export default function App() {
  return (
    <div className="w-[1707px] h-[898px] overflow-hidden flex flex-col bg-[#e6e6e6] font-['Liberation_Sans',sans-serif]">
      <Defs />
      <div className="h-[27px] bg-black shrink-0 flex items-center text-[15px] text-[#d6d6d6] font-['Open_Sans',sans-serif] relative">
        <S w={16} h={12} className="ml-[11px]">
          <path d="M4 1c2-1 5 0 7 1l1 3c2 .5 4 2 4 3.5S13 11 9 11 1 9 .5 7 2 5 3 5.5c2 1 5 1.5 9 0-3 .5-7-1-8-4.5z" fill="#e00" />
        </S>
        <span className="ml-[6px] pb-[2px]">Activities</span>
        <span className="ml-[29px] pb-[2px] text-[14.5px]">Applications</span>
        <DD className="ml-[7px]" w={9} c="#d6d6d6" />
        <S w={15} h={13} className="ml-[22px]">
          <path d="M0 3h3V1h3v2h3V1h3v2h3M0 10h3V8h3v2h3V8h3v2h3" fill="none" stroke="#999" strokeDasharray="2 1" />
        </S>
        <span className="ml-[6px] pb-[2px] text-[14.5px]">Waveform 1 - SimVision</span>
        <DD className="ml-[7px]" w={9} c="#d6d6d6" />
        <span className="absolute left-[809px] pb-[2px] text-[14.5px] whitespace-pre">Nov 22  16:37</span>
        <div className="ml-auto flex items-center mr-[14px]">
          <S w={16} h={15}>
            <path d="M5.5 0h5v5h-5zM0 10h5v5H0zM11 10h5v5h-5z" fill="#ddd" />
            <path d="M8 5v3M2.5 10V8h11v2" stroke="#ddd" fill="none" />
          </S>
          <S w={16} h={14} className="ml-[12px]">
            <path d="M0 4h3l4-4v14l-4-4H0z" fill="#ddd" />
            <path d="M9 4a4 4 0 0 1 0 6M11 2a7 7 0 0 1 0 10M13 0a10 10 0 0 1 0 14" stroke="#ddd" fill="none" strokeWidth="1.2" />
          </S>
          <S w={15} h={15} className="ml-[13px]">
            <path d="M4 3a6 6 0 1 0 7 0M7.5 0v7" stroke="#ddd" fill="none" strokeWidth="1.7" />
          </S>
          <DD className="ml-[12px]" w={9} c="#d6d6d6" />
        </div>
      </div>
      <div className="h-[36px] shrink-0 rounded-t-[8px] bg-[#2e3436] border-b border-black flex items-center justify-center relative text-[14px] font-semibold text-[#e8e8e8] font-['Open_Sans',sans-serif]">
        <span>Waveform 1 - SimVision</span>
        <div className="absolute right-[15px] top-[14px] flex items-center">
          <S w={8} h={8}><rect y="6" width="8" height="2" fill="#eee" /></S>
          <S w={7} h={7} className="ml-[27px]"><rect x="1" y="1" width="5" height="5" fill="none" stroke="#eee" strokeWidth="2" /></S>
          <S w={8} h={8} className="ml-[26px]"><path d="M.5.5l7 7M7.5.5l-7 7" stroke="#eee" strokeWidth="2" /></S>
        </div>
      </div>
      <div className="h-[29px] shrink-0 flex items-center text-[12px] tracking-[0.2px] text-[#111] relative">
        <span className="ml-[6px]"><u>F</u>ile</span>
        <span className="ml-[15px]"><u>E</u>dit</span>
        <span className="ml-[15px]"><u>V</u>iew</span>
        <span className="ml-[15px]">E<u>x</u>plore</span>
        <span className="ml-[14px]">For<u>m</u>at</span>
        <span className="ml-[14px]">Sim<u>u</u>lation</span>
        <span className="ml-[14px]"><u>W</u>indows</span>
        <span className="ml-[14px]"><u>H</u>elp</span>
        <span className="ml-auto mr-[2px] text-[15px] leading-[15px] font-bold tracking-[1.2px] text-[#333] relative">
          c<span className="relative">a<span className="absolute left-0 top-[1px] w-[8px] h-[2px] bg-[#c00]" /></span>dence
        </span>
      </div>
      <div className="h-[3px] shrink-0 bg-[#cc0000]" />
      <Toolbar1 />
      <Toolbar2 />
      <Toolbar3 />
      <div className="h-[682px] shrink-0 flex">
        <SideTabs />
        <NamePanel />
        <CursorPanel />
        <WavePanel />
        <VScroll />
      </div>
      <div className="flex-1 border-t-2 border-[#9a9a9a] border-b border-b-[#9a9a9a] flex items-center min-h-0 mt-[1px] mb-[1px]">
        <div className="w-[24px] h-full flex items-center justify-center border-r border-[#bbb]">
          <S w={16} h={16}>
            <circle cx="8" cy="8" r="7.5" fill="#d03028" stroke="#7a1010" />
            <circle cx="8" cy="8" r="4.5" fill="#f0c8c0" />
            <circle cx="8" cy="8" r="2" fill="#d03028" />
          </S>
        </div>
        <div className="w-[21px] h-full flex items-center justify-center border-r border-[#bbb]">
          <S w={17} h={17}>
            <rect x="1" y="1" width="6" height="6" fill="#ccc" stroke="#666" />
            <rect x="1" y="10" width="6" height="6" fill="#888" stroke="#555" />
            <path d="M8 8l4-4 4 4-4 4z" fill="url(#cb)" />
          </S>
        </div>
        <div className="w-[21px] h-full flex items-center justify-center border-r border-[#bbb]">
          <S w={16} h={16}>
            <rect x=".5" y=".5" width="15" height="15" fill="#5f7fc0" stroke="#27407a" />
            <rect x="3" y="1" width="10" height="6" fill="#e8eef8" />
            <rect x="4" y="10" width="8" height="5" fill="#c8d0e0" />
          </S>
        </div>
        <div className="ml-auto h-full w-[113px] border-l border-[#9a9a9a] flex items-center pl-[4px] text-[12px] tracking-[0.25px] text-[#111] whitespace-pre">0  objects selected</div>
      </div>
    </div>
  );
}
